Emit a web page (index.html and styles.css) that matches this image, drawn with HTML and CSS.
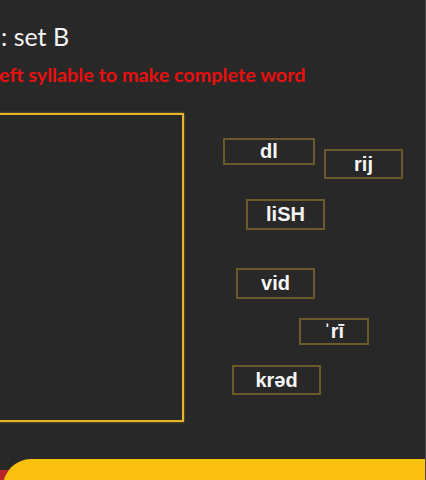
FILE: index.html
```
<!DOCTYPE html>
<html lang="en">
<head>
  <meta charset="UTF-8">
  <title>Syllables: set B</title>
  <link rel="stylesheet" href="styles.css">
</head>
<body>
  <div class="slide">
    <header class="slide-head">
      <h1>: set B</h1>
      <p class="instruction">eft syllable to make complete word</p>
    </header>

    <div class="stage">
      <div class="drop-box"></div>

      <div class="word-bank">
        <span class="chip" style="left: 23px; top: 0; width: 92px; height: 27px;">dl</span>
        <span class="chip" style="left: 124px; top: 11px; width: 79px; height: 30px;">rij</span>
        <span class="chip" style="left: 46px; top: 61px; width: 79px; height: 31px;">liSH</span>
        <span class="chip" style="left: 36px; top: 130px; width: 79px; height: 31px;">vid</span>
        <span class="chip" style="left: 99px; top: 180px; width: 70px; height: 27px;">ˈrī</span>
        <span class="chip" style="left: 32px; top: 227px; width: 89px; height: 30px;">krəd</span>
      </div>
    </div>

    <footer class="slide-foot">
      <div class="foot-red"></div>
      <div class="foot-yellow"></div>
    </footer>
  </div>
</body>
</html>
```

FILE: styles.css
```
:root {
  --slide-bg: #282828;
  --gold: #e8b52a;
  --chip-border: #6b5a2a;
  --red: #e8100f;
  --yellow: #f9c00f;
}

* {
  box-sizing: border-box;
  margin: 0;
  padding: 0;
}

html, body {
  height: 100%;
}

body {
  background: var(--slide-bg);
  overflow: hidden;
}

.slide {
  width: 426px;
  height: 480px;
  position: relative;
  overflow: hidden;
  border-right: 1px solid #4a4a4a;
  display: flex;
  flex-direction: column;
}

.slide-head {
  padding-top: 20px;
  height: 113px;
  flex-shrink: 0;
}

.slide-head h1 {
  font-family: Lato, sans-serif;
  font-weight: 400;
  font-size: 25px;
  line-height: 32px;
  color: #f4f4f4;
  padding-left: 1px;
}

.instruction {
  font-family: Lato, sans-serif;
  font-weight: 700;
  font-size: 19.8px;
  line-height: 24px;
  color: var(--red);
  margin-top: 10px;
  margin-left: -1px;
  white-space: nowrap;
}

.stage {
  display: flex;
  height: 309px;
  flex-shrink: 0;
}

.drop-box {
  width: 194px;
  margin-left: -10px;
  height: 309px;
  border: 2px solid var(--gold);
  box-shadow: 0 0 2px rgba(232, 181, 42, 0.6);
}

.word-bank {
  position: relative;
  flex: 1;
  margin-top: 25px;
  margin-left: 16px;
}

.chip {
  position: absolute;
  display: flex;
  align-items: center;
  justify-content: center;
  border: 2px solid var(--chip-border);
  font-family: "Liberation Sans", Arial, sans-serif;
  font-weight: 700;
  font-size: 20px;
  color: #f6f6f6;
}

.slide-foot {
  position: relative;
  flex: 1;
  margin-top: 37px;
}

.foot-red {
  position: absolute;
  left: -20px;
  top: 11px;
  width: 40px;
  height: 40px;
  background: #b8232a;
}

.foot-yellow {
  position: absolute;
  left: 3px;
  top: 0;
  right: -1px;
  height: 40px;
  background: var(--yellow);
  border-top-left-radius: 28px;
}
```
